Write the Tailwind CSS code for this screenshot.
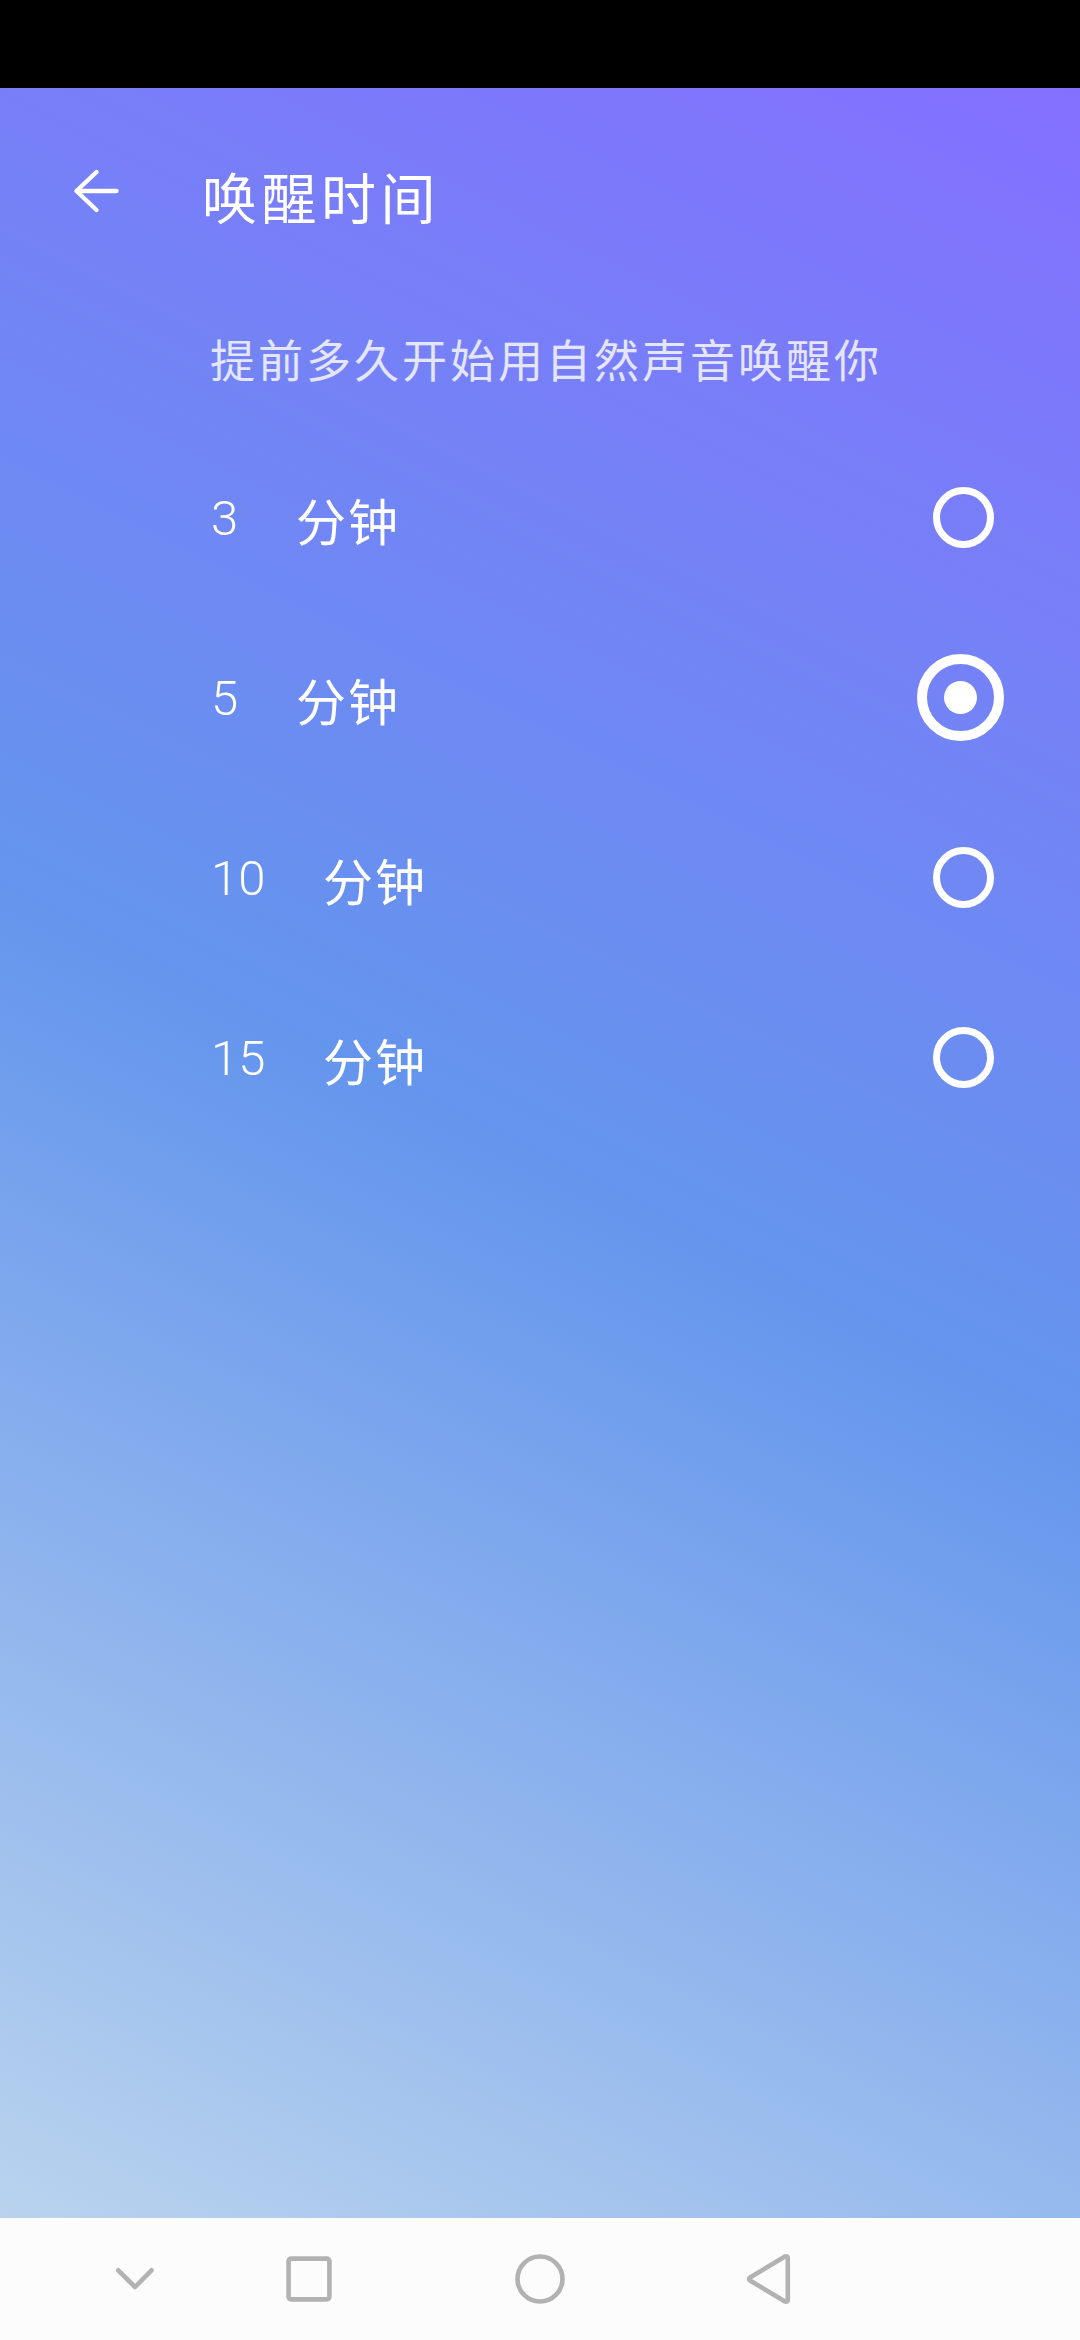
<!DOCTYPE html>
<html lang="zh-CN">
<head>
<meta charset="utf-8">
<title>唤醒时间</title>
<script src="https://cdn.jsdelivr.net/npm/@tailwindcss/browser@4"></script>
</head>
<body class="w-[1080px] h-[2340px] flex flex-col overflow-hidden font-['AR_PL_UKai_CN','KaiTi','Noto_Sans_CJK_SC',sans-serif] text-white">
  <div class="h-[88px] shrink-0 bg-black"></div>
  <div class="h-[2130px] shrink-0 flex flex-col bg-[linear-gradient(206.5deg,#8470ff_0%,#6495ed_50%,#b9d3ee_100%)]">
    <header class="h-[206px] shrink-0 flex items-center">
      <svg class="ml-[72px] w-[50px] h-[50px]" viewBox="0 0 50 50" fill="none" stroke="currentColor" stroke-width="4.4" stroke-linecap="round" stroke-linejoin="round"><path d="M44.5 25H4.5M24.5 6L4.5 25L24.5 44"/></svg>
      <h1 class="ml-[80px] mt-2 text-[55px] leading-[80px] tracking-[4.5px]">唤醒时间</h1>
    </header>
    <p class="h-[133px] shrink-0 pl-[210px] pt-[30px] text-[45px] leading-[70px] tracking-[3px] text-white/80">提前多久开始用自然声音唤醒你</p>
    <ul class="flex flex-col text-[50px] leading-[70px]">
      <li class="h-[180px] pl-[211px] pr-[86px] flex items-center justify-between">
        <div class="flex pt-1"><span class="w-[85px] text-[49px] font-light font-[Roboto]">3</span><span class="tracking-[2px]">分钟</span></div>
        <span class="size-[61px] rounded-full border-[7.5px] border-white"></span>
      </li>
      <li class="h-[180px] pl-[211px] pr-[76px] flex items-center justify-between">
        <div class="flex pt-1"><span class="w-[85px] text-[49px] font-light font-[Roboto]">5</span><span class="tracking-[2px]">分钟</span></div>
        <span class="size-[87px] rounded-full border-[10.5px] border-white flex items-center justify-center"><span class="size-[33px] rounded-full bg-white"></span></span>
      </li>
      <li class="h-[180px] pl-[211px] pr-[86px] flex items-center justify-between">
        <div class="flex pt-1"><span class="w-[112px] text-[49px] font-light font-[Roboto]">10</span><span class="tracking-[2px]">分钟</span></div>
        <span class="size-[61px] rounded-full border-[7.5px] border-white"></span>
      </li>
      <li class="h-[180px] pl-[211px] pr-[86px] flex items-center justify-between">
        <div class="flex pt-1"><span class="w-[112px] text-[49px] font-light font-[Roboto]">15</span><span class="tracking-[2px]">分钟</span></div>
        <span class="size-[61px] rounded-full border-[7.5px] border-white"></span>
      </li>
    </ul>
  </div>
  <nav class="h-[122px] shrink-0 bg-[#fcfcfc]">
    <svg class="w-[1080px] h-[122px]" viewBox="0 0 1080 122" fill="none" stroke="#b2b2b2" stroke-width="4.6" stroke-linecap="round" stroke-linejoin="round">
      <path d="M118.3 52.3L135 69L151.5 52.3"/>
      <rect x="288.6" y="40.6" width="40.8" height="40.8" rx="2.5"/>
      <circle cx="540" cy="61" r="22.5"/>
      <path d="M785 38.5L750 59.5Q748 61 750 62.5L785 83.5Q787.8 84 787.8 82V40Q787.8 38 785 38.5Z"/>
    </svg>
  </nav>
</body>
</html>
